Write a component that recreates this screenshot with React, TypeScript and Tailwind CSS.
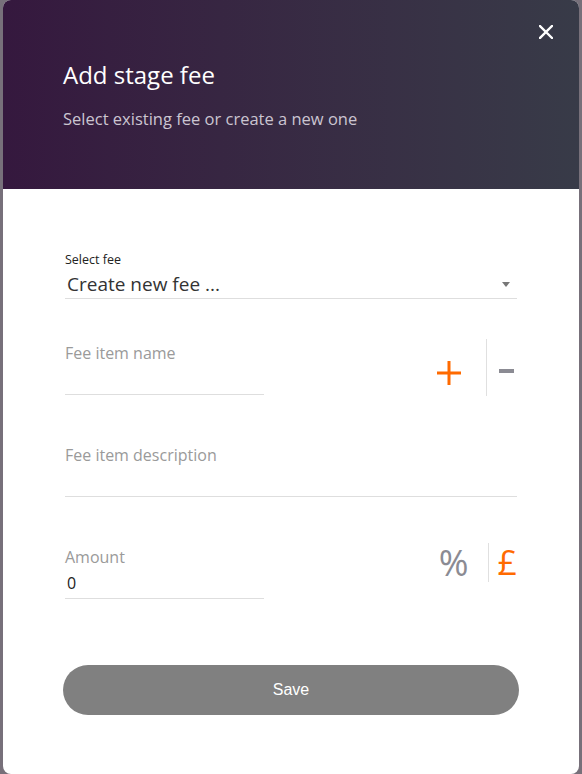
import React from "react";

const font = { fontFamily: '"Open Sans", "Noto Sans", Arial, sans-serif' };

const PlusIcon = () => (
  <svg width="24" height="24" viewBox="0 0 24 24" className="block">
    <path d="M12 0v24M0 12h24" stroke="#ff6a00" strokeWidth="3" />
  </svg>
);

const MinusIcon = () => (
  <svg width="15" height="4" viewBox="0 0 15 4" className="block">
    <rect x="0" y="0" width="15" height="4" fill="#8b8b93" />
  </svg>
);

const CloseIcon = () => (
  <svg width="14" height="14" viewBox="0 0 14 14" className="block">
    <path d="M1 1l12 12M13 1L1 13" stroke="#ffffff" strokeWidth="2.4" strokeLinecap="square" />
  </svg>
);

const App = () => {
  return (
    <div className="flex h-[774px] w-[582px] bg-[#77707a] px-[3px]" style={font}>
      <div className="flex flex-1 flex-col overflow-hidden rounded-lg bg-white">
        {/* header */}
        <div className="relative h-[189px] shrink-0 bg-gradient-to-r from-[#35183e] to-[#383b48] pl-[60px] pt-[57px]">
          <button className="absolute right-[26px] top-[25px] p-0">
            <CloseIcon />
          </button>
          <h2 className="text-[24px] leading-[36px] text-white">Add stage fee</h2>
          <p className="mt-[16px] text-[16.5px] leading-[20px] text-[#cbc5d1]">
            Select existing fee or create a new one
          </p>
        </div>

        {/* body */}
        <div className="flex flex-1 flex-col px-[62px] pt-[64px]">
          {/* select */}
          <div>
            <div className="text-[12.5px] leading-[14px] text-[#222]">Select fee</div>
            <div className="mt-[5px] flex h-[27px] items-center justify-between border-b border-[#dedede] pb-[2px]">
              <span className="pl-[2px] text-[19px] leading-[24px] text-[#333]">Create new fee ...</span>
              <span className="mr-[7px] h-0 w-0 border-x-[4.5px] border-t-[5px] border-x-transparent border-t-[#777]" />
            </div>
          </div>

          {/* fee item name */}
          <div className="mt-[44px] flex items-start justify-between">
            <div className="flex h-[52px] w-[199px] flex-col justify-between border-b border-[#dedede]">
              <span className="text-[16px] leading-[20px] text-[#9a9a9a]">Fee item name</span>
            </div>
            <div className="-mt-[4px] flex h-[57px] items-start">
              <div className="mt-[22px]">
                <PlusIcon />
              </div>
              <div className="ml-[25px] h-[57px] w-px bg-[#e0e0e0]" />
              <div className="ml-[12px] mr-[3px] mt-[30px]">
                <MinusIcon />
              </div>
            </div>
          </div>

          {/* description */}
          <div className="mt-[49px] flex h-[52px] flex-col border-b border-[#dedede]">
            <span className="text-[16px] leading-[20px] text-[#9a9a9a]">Fee item description</span>
          </div>

          {/* amount */}
          <div className="mt-[50px] flex items-start justify-between">
            <div className="flex w-[199px] flex-col border-b border-[#dedede]">
              <span className="text-[16px] leading-[20px] text-[#9a9a9a]">Amount</span>
              <span className="mt-[5px] h-[26px] pl-[2px] text-[16px] leading-[22px] text-[#222]">0</span>
            </div>
            <div className="-mt-[4px] flex h-[39px] items-center">
              <span className="text-[36px] leading-[39px] text-[#8b8b93]">%</span>
              <div className="ml-[19px] h-[39px] w-px bg-[#e0e0e0]" />
              <span className="ml-[9px] text-[34px] leading-[39px] text-[#ff6a00]">£</span>
            </div>
          </div>

          {/* save */}
          <button
            className="-mx-[2px] mt-[66px] h-[50px] rounded-full bg-[#808080] text-[16px] text-white"
            style={{ fontFamily: '"Liberation Sans", Arial, sans-serif' }}
          >
            Save
          </button>
        </div>
      </div>
    </div>
  );
};

export default App;
